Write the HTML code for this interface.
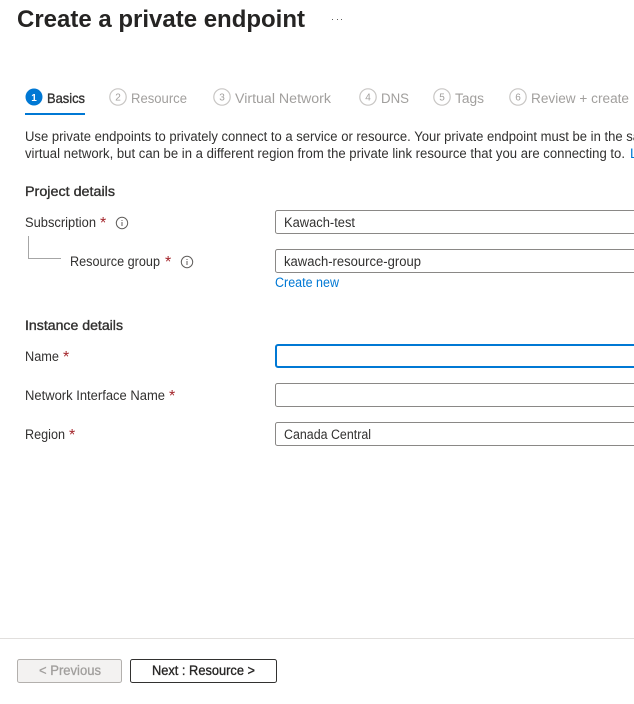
<!DOCTYPE html>
<html><head><meta charset="utf-8"><title>Create a private endpoint</title>
<style>
html,body{margin:0;padding:0;background:#fff;width:634px;height:704px;overflow:hidden}
svg{display:block;position:absolute;left:0;top:0}
text{font-family:"Liberation Sans",sans-serif;font-size:13.5px;fill:#323130}
.g{fill:#a19f9d}
.b{font-weight:bold}
.s{stroke:#323130;stroke-width:.35px}
.r{fill:#a4262c;font-size:16px}
.n{font-size:10px;text-anchor:middle;fill:#a19f9d}
.c{fill:none;stroke:#c8c6c4;stroke-width:1.2}
.i{fill:none;stroke:#605e5c;stroke-width:1}
.f{fill:#fff;stroke:#8a8886;stroke-width:1}
</style></head><body>
<svg width="634" height="704" viewBox="0 0 634 704">
<text x="17" y="27" class="b" style="font-size:24px;fill:#252423" textLength="288" lengthAdjust="spacingAndGlyphs">Create a private endpoint</text>
<g fill="#605e5c"><rect x="332" y="19" width="1" height="1"/><rect x="337" y="19" width="1" height="1"/><rect x="341" y="19" width="1" height="1"/></g>

<circle cx="34" cy="97" r="8.5" fill="#0078d4"/>
<text x="34" y="101" class="b" style="font-size:10px;text-anchor:middle;fill:#fff">1</text>
<text x="47" y="103" class="s" textLength="38" lengthAdjust="spacingAndGlyphs" style="font-size:14px">Basics</text>
<rect x="25" y="113" width="60" height="2" fill="#0078d4"/>

<circle class="c" cx="118" cy="97" r="8.2"/><text class="n" x="118" y="100.5">2</text>
<text class="g" x="131" y="103" textLength="56" lengthAdjust="spacingAndGlyphs">Resource</text>
<circle class="c" cx="222" cy="97" r="8.2"/><text class="n" x="222" y="100.5">3</text>
<text class="g" x="235" y="103" textLength="96" lengthAdjust="spacingAndGlyphs">Virtual Network</text>
<circle class="c" cx="368" cy="97" r="8.2"/><text class="n" x="368" y="100.5">4</text>
<text class="g" x="381" y="103" textLength="28" lengthAdjust="spacingAndGlyphs">DNS</text>
<circle class="c" cx="442" cy="97" r="8.2"/><text class="n" x="442" y="100.5">5</text>
<text class="g" x="455" y="103" textLength="29" lengthAdjust="spacingAndGlyphs">Tags</text>
<circle class="c" cx="518" cy="97" r="8.2"/><text class="n" x="518" y="100.5">6</text>
<text class="g" x="531" y="103" textLength="98" lengthAdjust="spacingAndGlyphs">Review + create</text>

<text x="25" y="141" textLength="615" lengthAdjust="spacingAndGlyphs">Use private endpoints to privately connect to a service or resource. Your private endpoint must be in the sa</text>
<text x="25" y="158" textLength="600" lengthAdjust="spacingAndGlyphs">virtual network, but can be in a different region from the private link resource that you are connecting to.</text>
<text x="630" y="158" style="fill:#0078d4">L</text>

<text x="25" y="196" class="s" textLength="90" lengthAdjust="spacingAndGlyphs">Project details</text>
<text x="25" y="227" textLength="71" lengthAdjust="spacingAndGlyphs">Subscription</text>
<text x="100" y="228" class="r">*</text>
<circle class="i" cx="122" cy="223" r="5.7"/><rect x="121.5" y="222" width="1" height="4" fill="#605e5c"/><rect x="121.5" y="220" width="1" height="1" fill="#605e5c"/>
<path d="M28.5 236V258.5H61" fill="none" stroke="#a6a6a6"/>
<text x="70" y="266" textLength="90" lengthAdjust="spacingAndGlyphs">Resource group</text>
<text x="165" y="267" class="r">*</text>
<circle class="i" cx="187" cy="262" r="5.7"/><rect x="186.5" y="261" width="1" height="4" fill="#605e5c"/><rect x="186.5" y="259" width="1" height="1" fill="#605e5c"/>

<rect class="f" x="275.5" y="210.5" width="380" height="23" rx="2"/>
<text x="284" y="227" textLength="71" lengthAdjust="spacingAndGlyphs">Kawach-test</text>
<rect class="f" x="275.5" y="249.5" width="380" height="23" rx="2"/>
<text x="284" y="266" textLength="137" lengthAdjust="spacingAndGlyphs">kawach-resource-group</text>
<text x="275" y="287" textLength="64" lengthAdjust="spacingAndGlyphs" style="fill:#0078d4">Create new</text>

<text x="25" y="330" class="s" textLength="98" lengthAdjust="spacingAndGlyphs">Instance details</text>
<text x="25" y="361" textLength="34" lengthAdjust="spacingAndGlyphs">Name</text>
<text x="63" y="362" class="r">*</text>
<rect x="276" y="345" width="380" height="22" rx="2" fill="#fff" stroke="#0078d4" stroke-width="2"/>
<text x="25" y="400" textLength="140" lengthAdjust="spacingAndGlyphs">Network Interface Name</text>
<text x="169" y="401" class="r">*</text>
<rect class="f" x="275.5" y="383.5" width="380" height="23" rx="2"/>
<text x="25" y="439" textLength="40" lengthAdjust="spacingAndGlyphs">Region</text>
<text x="69" y="440" class="r">*</text>
<rect class="f" x="275.5" y="422.5" width="380" height="23" rx="2"/>
<text x="284" y="439" textLength="87" lengthAdjust="spacingAndGlyphs">Canada Central</text>

<rect x="0" y="638" width="634" height="1" fill="#e1dfdd"/>
<rect x="17.5" y="659.5" width="104" height="23" rx="2" fill="#f3f2f1" stroke="#b3b0ad"/>
<text class="g" x="39" y="675" textLength="62" lengthAdjust="spacingAndGlyphs" style="stroke:#a19f9d;stroke-width:.3px">&lt; Previous</text>
<rect x="130.5" y="659.5" width="146" height="23" rx="2" fill="#fff" stroke="#323130"/>
<text x="152" y="675" class="s" textLength="103" lengthAdjust="spacingAndGlyphs" style="fill:#201f1e">Next : Resource &gt;</text>
</svg>
</body></html>
